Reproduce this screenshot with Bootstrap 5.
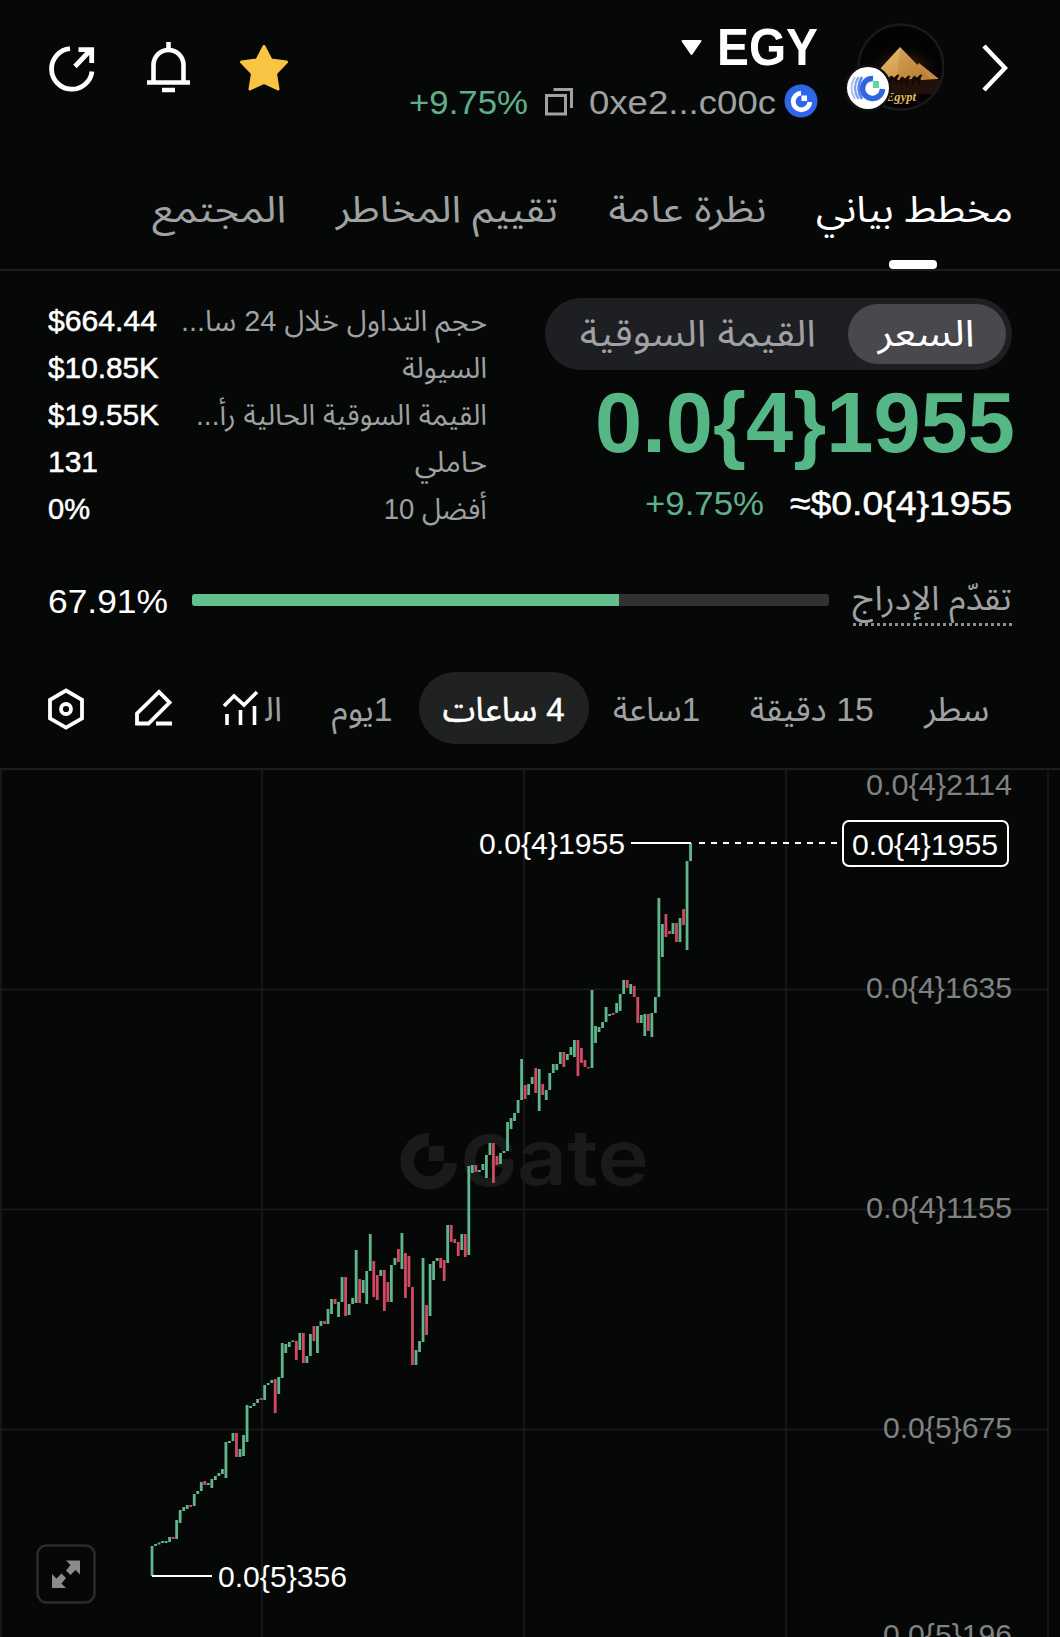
<!DOCTYPE html>
<html lang="ar" dir="rtl">
<head>
    <meta charset="UTF-8">
    <meta name="viewport" content="width=device-width, initial-scale=1">
    <title>EGY</title>
    <link href="https://cdn.jsdelivr.net/npm/bootstrap@5.3.2/dist/css/bootstrap.min.css" rel="stylesheet">
    <style>
        body { background: #060807; color: #fff; font-family: "Liberation Sans", "Noto Sans Arabic", "Noto Sans", "DejaVu Sans", sans-serif; font-size: 34px; overflow: hidden; }
        svg { display: block; flex-shrink: 0; }
        .fit { display: inline-block; white-space: nowrap; flex-shrink: 0; }
        .fit > span { display: inline-block; transform-origin: left; }
        .fit[dir="rtl"] > span { transform-origin: right; }
        .muted { color: #9fa1a2; }
        .up { color: #5eb08a; }
        .medium { -webkit-text-stroke: .5px currentColor; }

        /* Header */
        .top-bar { height: 138px; padding: 0 52px 0 49px; }
        .coin { margin-right: 28px; padding-top: 6px; }
        .coin-name { font-size: 51px; line-height: 60px; gap: 15px; }
        .coin-addr { line-height: 48px; }
        .coin-addr .pct { margin-right: 17px; }
        .avatar { margin-right: 38px; }
        .bell { margin: 0 48px 0 51px; }

        /* Tabs */
        .main-tabs { height: 133px; padding: 45px 47px 0; gap: 50px; border-bottom: 2px solid #1c1e1e; font-size: 37px; line-height: 54px; }
        .main-tabs .on::after { content: ""; position: absolute; left: 73px; bottom: 0; width: 48px; height: 9px; border-radius: 4px; background: #fff; }

        /* Price + stats */
        .summary { padding: 27px 48px 0 48px; }
        .price-side { width: 467px; }
        .switch { height: 72px; padding: 6px; background: #1e1f23; font-size: 37px; line-height: 60px; }
        .switch .on { width: 158px; background: #48484d; padding-right: 31px; }
        .switch .off { padding-right: 32px; }
        .price { margin: 12px -3px 0 0; font-size: 86px; line-height: 80px; color: #55b785; }
        .sub-price { margin-top: 17px; line-height: 48px; gap: 26px; }
        .stat-side { width: 439px; font-size: 29px; line-height: 47px; }

        /* Listing progress */
        .listing { margin-top: 43px; padding: 0 48px 0 48px; height: 50px; line-height: 50px; gap: 24px; }
        .listing .progress { height: 12px; border-radius: 3px; background: #303133; margin-bottom: 2px; }
        .listing .progress-bar { background: #63bf8c; }
        .dotted { height: 50px; border-bottom: 3px dotted #8d8f90; line-height: 44px; }

        /* Timeframes */
        .frames { margin-top: 46px; height: 98px; padding: 0 71px 0 47px; border-bottom: 2px solid #1c1e1e; line-height: 74px; }
        .frames .on { width: 170px; height: 72px; background: #202221; margin: 0 24px 0 26px; }
        .frames .gap-before { margin-right: 50px; }
        .frames .cut { width: 17px; margin-right: 50px; overflow: hidden; }
        .tools { padding-top: 16px; }
        .pencil { margin: 0 50px 0 49px; }
    </style>
</head>
<body>
<!-- Header -->
<header class="top-bar d-flex align-items-center">
    <svg width="26" height="50" viewBox="0 0 26 50" fill="none" stroke="#fff" stroke-width="4.500"><path d="M2 2l21 22L2 46"/></svg>
    <div class="avatar">
        <svg width="98" height="94" viewBox="0 0 98 94">
            <defs>
                <radialGradient id="glow"><stop offset="0" stop-color="#6b3d10"/><stop offset="1" stop-color="#050403" stop-opacity="0"/></radialGradient>
                <linearGradient id="sand" x2="1" y2="1"><stop stop-color="#efc271"/><stop offset="1" stop-color="#b97d35"/></linearGradient>
                <clipPath id="disc"><circle cx="55" cy="45" r="42"/></clipPath>
            </defs>
            <circle cx="55" cy="45" r="42.500" fill="#040303" stroke="#191a1a" stroke-width="2.500"/>
            <g clip-path="url(#disc)">
                <ellipse cx="57" cy="45" rx="38" ry="22" fill="url(#glow)"/>
                <path d="M15 58h80v14H15z" fill="#20110a"/>
                <path d="M68 46l5-5 20 16-18 1z" fill="#c48a45"/>
                <path d="M33 48l21-23 30 31-50 3z" fill="url(#sand)"/>
                <path d="M54 26l-3 31 33-1z" fill="#a66f2c" opacity=".25"/>
                <path d="M43 56q2-4 5 0l3-3h2l-2 4v5h-1l-1-4-4 1v4h-1zM54 57q2-4 5 0l3-3h2l-2 4v5h-1l-1-4-4 1-1 4h-1zM66 57q2-5 5-1l3-3h2l-2 4v5h-1l-1-4-4 1-1 4h-1z" fill="#140a05" stroke="#140a05" stroke-width=".6"/>
                <text x="40" y="79" font-family="Liberation Serif, serif" font-size="12" font-style="italic" font-weight="700" fill="#e5bd5d" textLength="30" lengthAdjust="spacingAndGlyphs" direction="ltr">Egypt</text>
            </g>
            <circle cx="22" cy="66" r="23.500" fill="#101212"/>
            <circle cx="22" cy="66" r="21" fill="#fff"/>
            <g fill="none" stroke="#2f66e0">
                <path d="M27 56.500A10 10 0 1 0 36.500 67" stroke-width="5.500"/>
                <path d="M16 55q-7 11 0 22" stroke-width="2.500" opacity=".8"/>
                <path d="M12.500 55q-7 11 0 22" stroke-width="2.300" opacity=".6"/>
                <path d="M9 55q-7 11 0 22" stroke-width="2" opacity=".4"/>
            </g>
            <path d="M27 59h6v7h-6z" fill="#5bd79b"/>
        </svg>
    </div>
    <div class="coin">
        <div class="coin-name d-flex align-items-center fw-bold">
            <span class="fit" data-w="101" dir="ltr">EGY</span>
            <svg width="21" height="16" viewBox="0 0 21 16"><path d="M1.500 1h18L10.500 14z" fill="#fff" stroke="#fff" stroke-linejoin="round" stroke-width="2"/></svg>
        </div>
        <div class="coin-addr d-flex align-items-center">
            <svg width="34" height="36" viewBox="0 0 34 36"><circle cx="17" cy="17" r="16.500" fill="#2f66e8"/><path d="M17 9.200A8.300 8.300 0 1 0 25.800 18" fill="none" stroke="#fff" stroke-width="4.800"/><path d="M17.500 11.500h5.500v5.500h-5.500z" fill="#fff"/></svg>
            <span class="fit muted me-2" data-w="187" dir="ltr">0xe2...c00c</span>
            <svg class="me-3" width="28" height="28" viewBox="0 0 28 28" fill="none" stroke="#9fa1a2" stroke-width="3"><path d="M1.500 7.500h19v18.500h-19z"/><path d="M8.500 1.500h18v18.500"/></svg>
            <span class="fit up pct" data-w="119" dir="ltr">+9.75%</span>
        </div>
    </div>
    <div class="me-auto d-flex align-items-center">
        <svg width="50" height="50" viewBox="0 0 50 50"><path d="M25 2.500l7 13.500 15.500 2-11 11.500 2.500 15.500-14-6.500L11 45l2.500-15.500L2.500 18 18 16z" fill="#f8c443" stroke="#f8c443" stroke-width="3" stroke-linejoin="round"/></svg>
        <svg class="bell" width="45" height="54" viewBox="0 0 45 54" fill="none" stroke="#fff" stroke-width="4.600"><path d="M22.500 0v6M1 40.500h43M7.500 40V23a15 15 0 0 1 30 0v17M16 48h13"/></svg>
        <svg width="46" height="46" viewBox="0 0 46 46" fill="none" stroke="#fff" stroke-width="4.800"><path d="M21 2.700A20.300 20.300 0 1 0 43 25.500"/><path d="M26 20.500L41.500 4M29.500 3.700h13.200V17"/></svg>
    </div>
</header>

<!-- Tabs -->
<nav class="main-tabs d-flex position-relative muted">
    <div class="on position-relative text-white"><span class="fit" data-w="197" dir="rtl">مخطط بياني</span></div>
    <span class="fit" data-w="158" dir="rtl">نظرة عامة</span>
    <span class="fit" data-w="222" dir="rtl">تقييم المخاطر</span>
    <span class="fit" data-w="134" dir="rtl">المجتمع</span>
</nav>

<!-- Price and stats -->
<section class="summary d-flex justify-content-between">
    <div class="price-side">
        <div class="switch rounded-pill d-flex muted">
            <div class="on rounded-pill text-white"><span class="fit" data-w="97" dir="rtl">السعر</span></div>
            <div class="off"><span class="fit" data-w="236" dir="rtl">القيمة السوقية</span></div>
        </div>
        <div class="price fw-bold d-flex"><span class="fit" data-w="420" dir="ltr">0.0{4}1955</span></div>
        <div class="sub-price d-flex">
            <span class="fit medium" data-w="222" dir="ltr">≈$0.0{4}1955</span>
            <span class="fit up" data-w="119" dir="ltr">+9.75%</span>
        </div>
    </div>
    <div class="stat-side">
        <div class="d-flex justify-content-between"><span class="fit muted" data-w="306" dir="rtl">حجم التداول خلال 24 سا...</span><span class="fit medium" data-w="109" dir="ltr">$664.44</span></div>
        <div class="d-flex justify-content-between"><span class="fit muted" data-w="85" dir="rtl">السيولة</span><span class="fit medium" data-w="111" dir="ltr">$10.85K</span></div>
        <div class="d-flex justify-content-between"><span class="fit muted" data-w="291" dir="rtl">القيمة السوقية الحالية رأ...</span><span class="fit medium" data-w="111" dir="ltr">$19.55K</span></div>
        <div class="d-flex justify-content-between"><span class="fit muted" data-w="72" dir="rtl">حاملي</span><span class="fit medium" data-w="50" dir="ltr">131</span></div>
        <div class="d-flex justify-content-between"><span class="fit muted" data-w="103" dir="rtl">أفضل 10</span><span class="fit medium" data-w="42" dir="ltr">0%</span></div>
    </div>
</section>

<!-- Listing progress -->
<section class="listing d-flex align-items-center">
    <div class="dotted muted"><span class="fit" data-w="159" dir="rtl">تقدّم الإدراج</span></div>
    <div class="progress flex-grow-1" dir="ltr"><div class="progress-bar" id="listingBar"></div></div>
    <span class="fit" data-w="120" dir="ltr">67.91%</span>
</section>

<!-- Timeframes and chart tools -->
<nav class="frames d-flex muted">
    <span class="fit" data-w="65" dir="rtl">سطر</span>
    <span class="fit gap-before" data-w="124" dir="rtl">15 دقيقة</span>
    <span class="fit gap-before" data-w="87" dir="rtl">1ساعة</span>
    <div class="on rounded-pill text-white text-center"><span class="fit medium" data-w="122" dir="rtl">4 ساعات</span></div>
    <span class="fit" data-w="61" dir="rtl">1يوم</span>
    <span class="cut flex-shrink-0">ال&zwj;</span>
    <div class="tools me-auto d-flex">
        <svg width="38" height="40" viewBox="0 0 38 40" fill="none" stroke="#fff" stroke-width="3.600"><path d="M2 18l10-10 10 9L35 4M5 26v11M18.500 22v15M32.500 18v19"/></svg>
        <svg class="pencil" width="38" height="40" viewBox="0 0 38 40" fill="none" stroke="#fff" stroke-width="3.800"><path d="M3 35.500V25.500L25 4l10.500 10.500L14.500 35.500zM22 35.500h16"/></svg>
        <svg width="38" height="42" viewBox="0 0 38 42" fill="none" stroke="#fff" stroke-width="3.800"><path d="M19 2.500l16 9.300v18.500L19 39.600 3 30.300V11.800z"/><circle cx="19" cy="21" r="5"/></svg>
    </div>
</nav>

<!-- Chart -->
<svg id="chart" width="1060" height="867" viewBox="0 770 1060 867" font-family="Liberation Sans, sans-serif" font-size="29.500" direction="ltr">
    <g stroke="#1b1d1d" stroke-width="1.500">
        <path d="M1 770v867M262 770v867M524 770v867M786 770v867M1048 770v867M0 989.500h1048M0 1209.500h1048M0 1429.500h1048"/>
    </g>
    <!-- Watermark -->
    <g fill="#191b1b">
        <path d="M429 1139.500A21.700 21.700 0 1 0 450.500 1163" fill="none" stroke="#191b1b" stroke-width="13.500"/>
        <path d="M429 1146h15v15h-15z"/>
        <g font-family="Inter, sans-serif" font-weight="700">
            <text x="461" y="1186" font-size="70" textLength="56" lengthAdjust="spacingAndGlyphs">G</text>
            <text x="517" y="1185" font-size="77" font-weight="600" textLength="132" lengthAdjust="spacingAndGlyphs">ate</text>
        </g>
    </g>
    <g id="candles"></g>
    <g fill="#808282">
        <text x="866" y="795" textLength="146" lengthAdjust="spacingAndGlyphs">0.0{4}2114</text>
        <text x="866" y="998" textLength="146" lengthAdjust="spacingAndGlyphs">0.0{4}1635</text>
        <text x="866" y="1218" textLength="146" lengthAdjust="spacingAndGlyphs">0.0{4}1155</text>
        <text x="883" y="1438" textLength="129" lengthAdjust="spacingAndGlyphs">0.0{5}675</text>
        <text x="883" y="1645" textLength="129" lengthAdjust="spacingAndGlyphs">0.0{5}196</text>
    </g>
    <g fill="#fff">
        <text x="479" y="854" textLength="146" lengthAdjust="spacingAndGlyphs">0.0{4}1955</text>
        <text x="218" y="1587" textLength="129" lengthAdjust="spacingAndGlyphs">0.0{5}356</text>
        <rect x="843" y="821" width="165" height="45" rx="6" fill="#060807" stroke="#fff" stroke-width="2"/>
        <text x="852" y="855" textLength="146" lengthAdjust="spacingAndGlyphs">0.0{4}1955</text>
    </g>
    <path d="M631 843h60M152 1576h60" stroke="#fff" stroke-width="2"/>
    <path d="M699 843h138" stroke="#fff" stroke-width="2" stroke-dasharray="6 6"/>
    <!-- Fullscreen button -->
    <rect x="37.500" y="1545.500" width="57" height="57" rx="9" fill="none" stroke="#2a2c2c" stroke-width="2.500"/>
    <path d="M66 1560.500h14v14l-4.500-4.500-5 5-4.500-4.500 4.500-5.500zM66 1588H52v-14l4.500 4.500 5-5 4.500 4.500-4.500 5.500z" fill="#8a8c8c"/>
</svg>

<script src="https://cdn.jsdelivr.net/npm/bootstrap@5.3.2/dist/js/bootstrap.bundle.min.js"></script>
<script>
// [top, bottom, 1 = falling], one entry per 4h candle
const candles = [
    [1546,1576],[1544,1546],[1542.5,1544.5],[1541,1543],[1541,1543],[1537,1542],[1537,1539,1],[1520,1539],[1510,1523],[1507,1511],
    [1505,1509],[1505,1507,1],[1494,1506],[1491,1494],[1482,1491],[1481,1485,1],[1483,1485],[1479,1488],[1476,1480],[1473,1476],
    [1469,1474],[1442,1478],[1441,1443],[1433,1441],[1433,1457,1],[1449,1457],[1435,1456],[1405,1442],[1406,1408],[1403,1406],
    [1399,1403],[1398,1400,1],[1385,1400],[1383,1385],[1380,1383],[1379,1413,1],[1377,1394],[1343,1378],[1344,1353],[1342,1347],
    [1340.5,1342],[1341,1360,1],[1333,1350],[1333,1363,1],[1356,1363],[1334,1356],[1326,1341,1],[1326,1353],[1321,1326],[1321,1324,1],
    [1309,1324],[1299,1314],[1299,1304,1],[1302,1317],[1277,1302],[1277,1316,1],[1304,1315],[1298,1304],[1250,1303],[1279,1303,1],
    [1280,1293],[1271,1304],[1234,1271],[1261,1297,1],[1275,1300,1],[1270,1276],[1270,1311,1],[1282,1302,1],[1265,1302],[1258,1265],
    [1249,1262,1],[1233,1269],[1253,1298,1],[1256,1287,1],[1287,1365,1],[1350,1365],[1341,1352],[1258,1342],[1305,1335,1],[1264,1316],
    [1261,1280],[1258,1261],[1258,1268,1],[1260,1281,1],[1225,1263],[1225,1242,1],[1239,1243,1],[1242,1256,1],[1234,1250],[1234,1257,1],
    [1166,1255],[1165,1173],[1165,1172,1],[1170,1172],[1164,1170],[1155,1178],[1143,1155],[1143,1183,1],[1156,1165,1],[1153,1164],
    [1151,1153],[1122,1151],[1118,1129],[1113,1121],[1100,1113],[1059,1100],[1085,1099,1],[1084,1095],[1077,1084],[1068,1093,1],
    [1069,1111],[1084,1095,1],[1090,1100],[1073,1090],[1064,1073],[1064,1070],[1052,1064],[1052,1067,1],[1054,1060],[1047,1055],
    [1040,1057],[1040,1076,1],[1048,1063,1],[1060,1067,1],[1067,1068.5,1],[990,1068],[1026,1043],[1027,1032],[1022,1028],[1007,1022],
    [1014,1016],[1013,1015,1],[1003,1013],[994,1011],[980,994],[980,988,1],[984,994],[986,997,1],[997,1023,1],[1015,1023],
    [1014,1036],[1014,1031,1],[1013,1037],[997,1013],[898,997],[924,957],[914,937,1],[931,934,1],[923,934],[923,942,1],
    [918,942],[909,925,1],[861,950],[843,861]
];
document.getElementById('candles').innerHTML = candles.map(([top, bottom, down], i) =>
    `<rect x="${(150.6 + i * 3.52).toFixed(2)}" y="${top}" width="2.8" height="${bottom - top}" fill="${down ? '#d04a63' : '#5fb58c'}"/>`
).join('');

document.getElementById('listingBar').style.width = (427 / 637 * 100) + '%';

// Squeeze or stretch every label to its column width
document.querySelectorAll('.fit').forEach(el => {
    const inner = document.createElement('span');
    inner.textContent = el.textContent;
    el.replaceChildren(inner);
    const natural = inner.getBoundingClientRect().width;
    const width = Number(el.dataset.w);
    el.style.width = width + 'px';
    inner.style.transform = `scaleX(${width / natural})`;
});
</script>
</body>
</html>
